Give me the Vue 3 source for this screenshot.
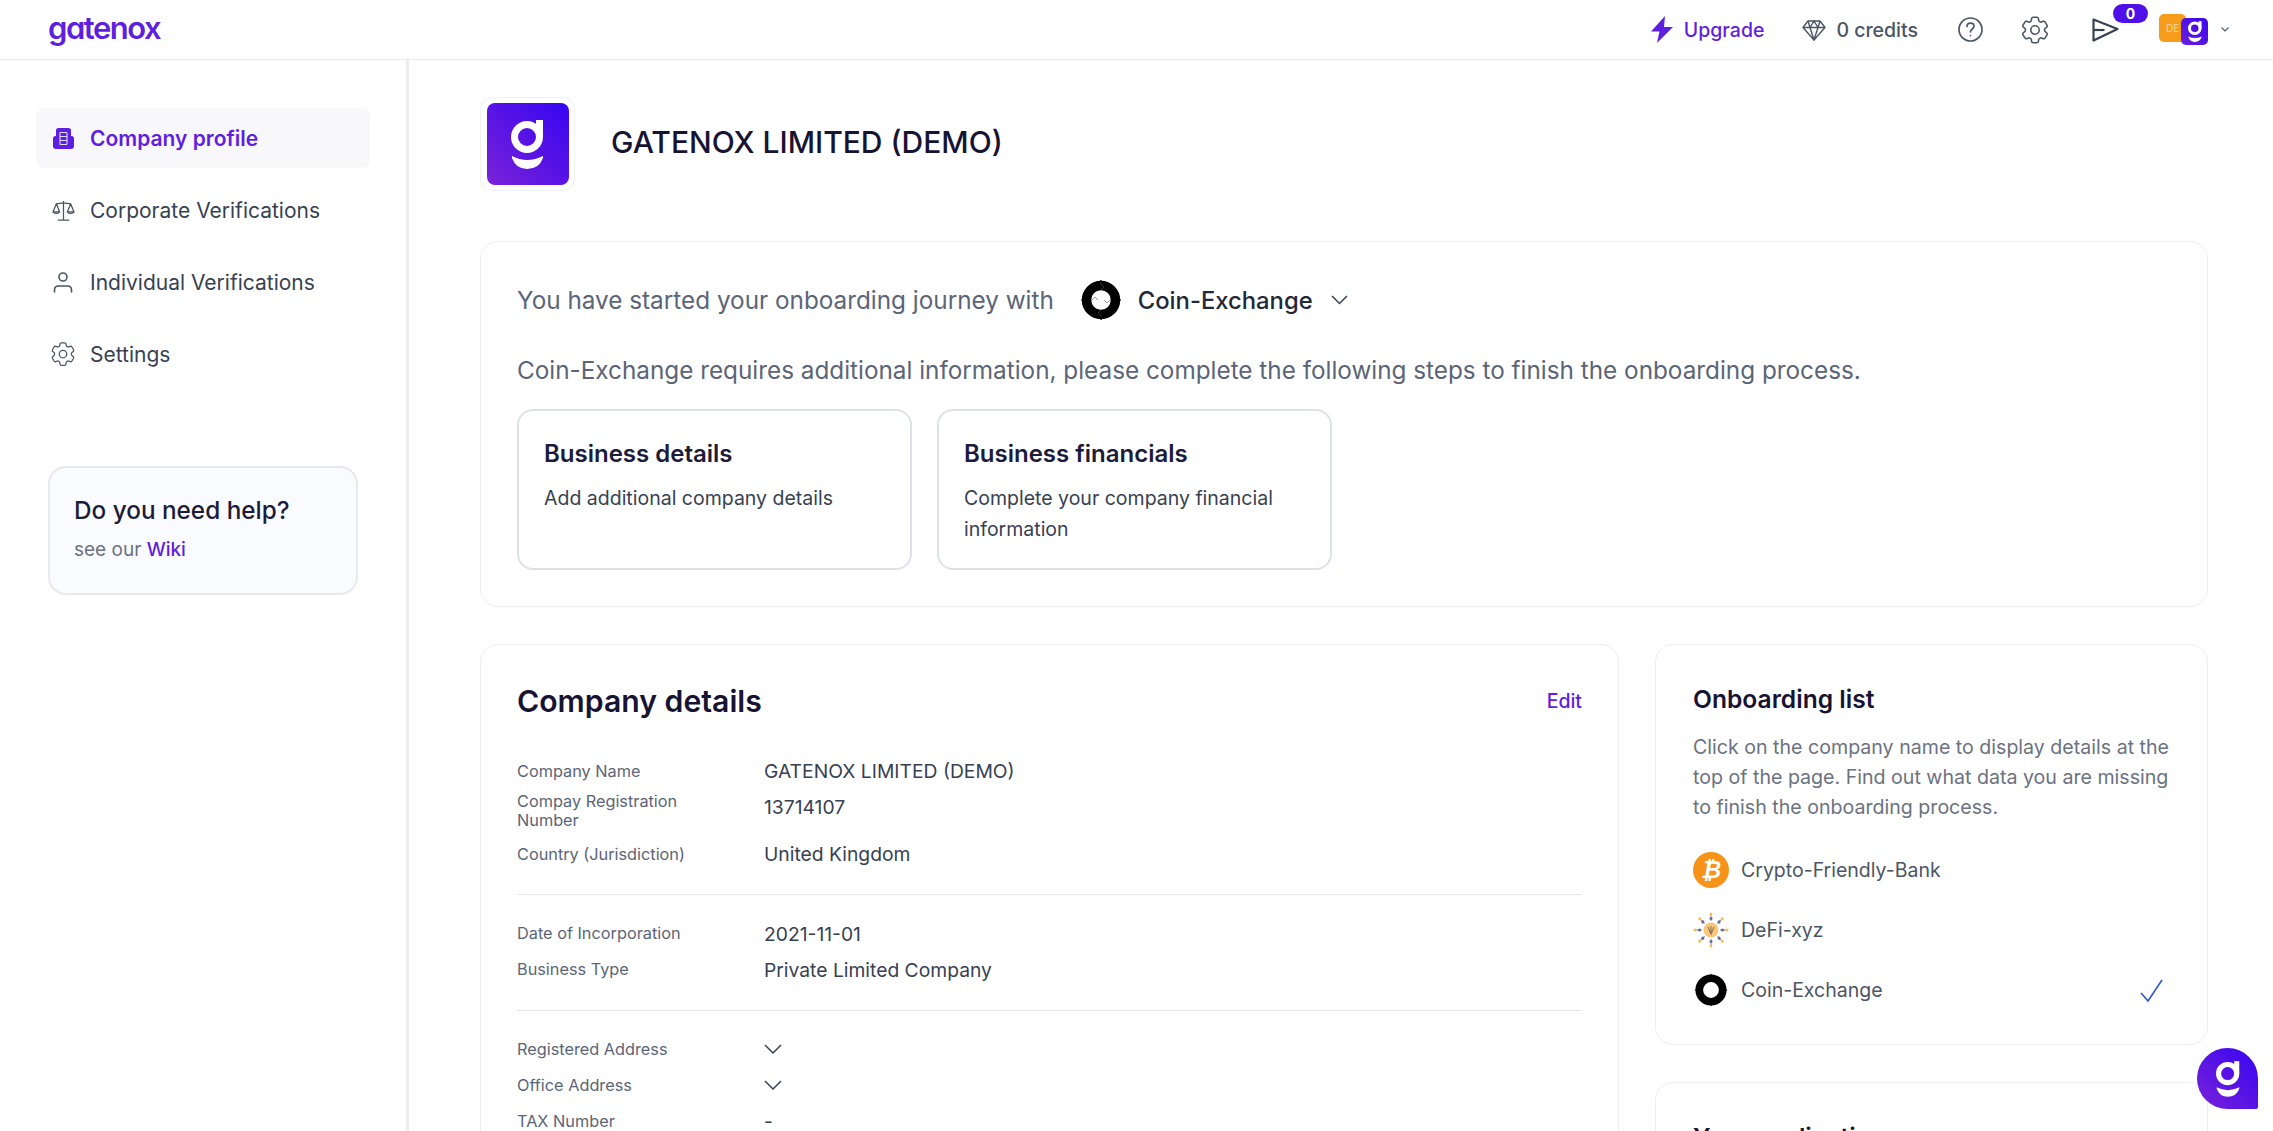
<script setup>
const navItems = [
  { label: "Company profile", icon: "building", active: true },
  { label: "Corporate Verifications", icon: "scale" },
  { label: "Individual Verifications", icon: "person" },
  { label: "Settings", icon: "gear" },
];
const gearPath = "M9.594 3.94c.09-.542.56-.94 1.11-.94h2.593c.55 0 1.02.398 1.11.94l.213 1.281c.063.374.313.686.645.87.074.04.147.083.22.127.324.196.72.257 1.075.124l1.217-.456a1.125 1.125 0 011.37.49l1.296 2.247a1.125 1.125 0 01-.26 1.431l-1.003.827c-.293.24-.438.613-.431.992a6.759 6.759 0 010 .255c-.007.378.138.75.43.99l1.005.828c.424.35.534.954.26 1.43l-1.298 2.247a1.125 1.125 0 01-1.369.491l-1.217-.456c-.355-.133-.75-.072-1.076.124a6.57 6.57 0 01-.22.128c-.331.183-.581.495-.644.869l-.213 1.28c-.09.543-.56.941-1.11.941h-2.594c-.55 0-1.02-.398-1.11-.94l-.213-1.281c-.062-.374-.312-.686-.644-.87a6.52 6.52 0 01-.22-.127c-.325-.196-.72-.257-1.076-.124l-1.217.456a1.125 1.125 0 01-1.369-.49l-1.297-2.247a1.125 1.125 0 01.26-1.431l1.004-.827c.292-.24.437-.613.43-.992a6.932 6.932 0 010-.255c.007-.378-.138-.75-.43-.99l-1.004-.828a1.125 1.125 0 01-.26-1.43l1.297-2.247a1.125 1.125 0 011.37-.491l1.216.456c.356.133.751.072 1.076-.124.072-.044.146-.087.22-.128.332-.183.582-.495.644-.869l.214-1.281z";
const steps = [
  { title: "Business details", text: "Add additional company details" },
  { title: "Business financials", text: "Complete your company financial information" },
];
const groups = [
  [
    { label: "Company Name", value: "GATENOX LIMITED (DEMO)" },
    { label: "Compay Registration Number", value: "13714107", top: true },
    { label: "Country (Jurisdiction)", value: "United Kingdom" },
  ],
  [
    { label: "Date of Incorporation", value: "2021-11-01" },
    { label: "Business Type", value: "Private Limited Company" },
  ],
  [
    { label: "Registered Address", chevron: true },
    { label: "Office Address", chevron: true },
    { label: "TAX Number", value: "-" },
  ],
];
const onboarding = [
  { name: "Crypto-Friendly-Bank", icon: "btc" },
  { name: "DeFi-xyz", icon: "defi" },
  { name: "Coin-Exchange", icon: "ring", selected: true },
];
const rays = [0, 45, 90, 135, 180, 225, 270, 315];
</script>

<template>
  <div class="page">
    <header class="topbar">
      <span class="brand">gatenox</span>
      <div class="tools">
        <span class="tool upgrade">
          <svg width="24" height="27" viewBox="0 0 24 27"><path d="M15 0 1 15.500h8.500L7 27l16-16h-9z" fill="#5f1fe0"/></svg>
          Upgrade
        </span>
        <span class="tool credits">
          <svg width="24" height="24" viewBox="0 0 24 24" fill="none" stroke="#4b5563" stroke-width="1.400" stroke-linejoin="round"><path d="M6 3h12l5 6.500L12 22 1 9.500z"/><path d="M1 9.500h22M8 9.500 12 22l4-12.500M6 3l2 6.500L12 3l4 6.500L18 3"/></svg>
          0 credits
        </span>
        <svg width="25" height="25" viewBox="0 0 25 25" fill="none" stroke="#4b5563" stroke-width="1.700" stroke-linecap="round"><circle cx="12.500" cy="12.500" r="11.500"/><path d="M9 9.500c0-2 1.600-3.300 3.500-3.300S16 7.500 16 9.300c0 2.700-3.500 2.700-3.500 5.500"/><path d="M12.500 18.500v.1"/></svg>
        <svg class="top-gear" width="34" height="34" viewBox="0 0 24 24" fill="none" stroke="#4b5563" stroke-width="1.100" stroke-linejoin="round"><path :d="gearPath"/><circle cx="12" cy="12" r="3"/></svg>
        <span class="send">
          <svg width="27" height="24" viewBox="0 0 27 24" fill="none" stroke="#374151" stroke-width="2.200" stroke-linejoin="round"><path d="M1.500 1.500 25.500 11 1.500 22.500z"/><path d="M1.500 12h11"/></svg>
          <span class="badge">0</span>
        </span>
        <span class="avatar">
          <span class="avatar-de">DE</span>
          <span class="avatar-g">
            <svg width="14" height="21" viewBox="0 0 33 49"><circle cx="16" cy="17" r="12.500" fill="none" stroke="#fff" stroke-width="7"/><path d="M25 0h7v17h-7z" fill="#fff"/><path d="M1 36Q16 44 32 36L32 38Q28 49 16 49 5 49 1 38z" fill="#fff"/></svg>
          </span>
        </span>
        <svg class="small-chevron" width="8" height="5" viewBox="0 0 8 5" fill="none" stroke="#4b5563" stroke-width="1.100"><path d="m.5.5 3.500 3.500L7.500.5"/></svg>
      </div>
    </header>

    <div class="body">
      <aside class="sidebar">
        <nav class="nav">
          <a v-for="item in navItems" :key="item.label" class="nav-item" :class="{ active: item.active }">
            <span class="nav-icon">
              <svg v-if="item.icon === 'building'" width="21" height="21" viewBox="0 0 21 21"><path d="M3 8V2.500Q3 0 5.500 0h10Q18 0 18 2.500V8h.5Q21 8 21 10.500V18q0 3-3 3H3q-3 0-3-3v-7.500Q0 8 2.500 8z" fill="#5f1fe0"/><path d="M7 4.500h7M7 8.500h7M7 12.500h7M7 16.500h7M7 4.500v12M14 4.500v12" stroke="#e4d8fb" stroke-width="1.100" fill="none"/></svg>
              <svg v-else-if="item.icon === 'scale'" width="23" height="21" viewBox="0 0 24 22" fill="none" stroke="#4b5563" stroke-width="1.300" stroke-linejoin="round"><path d="M12 1v20M6 21h12M4.500 4 12 3l7.500 1"/><path d="M4.500 4 1 12.500h7zM19.500 4 16 12.500h7z"/><path d="M1 12.500q3.500 3 7 0M16 12.500q3.500 3 7 0"/></svg>
              <svg v-else-if="item.icon === 'person'" width="20" height="21" viewBox="0 0 20 21" fill="none" stroke="#4b5563" stroke-width="1.600"><circle cx="10" cy="5" r="4"/><path d="M1.500 20.500v-2.500q0-4 4-4h9q4 0 4 4v2.500"/></svg>
              <svg v-else width="38" height="38" viewBox="0 0 24 24" fill="none" stroke="#4b5563" stroke-width="1" stroke-linejoin="round"><path :d="gearPath"/><circle cx="12" cy="12" r="3"/></svg>
            </span>
            {{ item.label }}
          </a>
        </nav>
        <div class="help">
          <div class="help-title">Do you need help?</div>
          <div class="help-text">see our <a class="wiki">Wiki</a></div>
        </div>
      </aside>

      <main class="main">
        <div class="company-head">
          <span class="company-logo">
            <span class="company-logo-inner">
              <svg width="33" height="49" viewBox="0 0 33 49"><circle cx="16" cy="17" r="12.500" fill="none" stroke="#fff" stroke-width="7"/><path d="M25 0h7v17h-7z" fill="#fff"/><path d="M1 36Q16 44 32 36L32 38Q28 49 16 49 5 49 1 38z" fill="#fff"/></svg>
            </span>
          </span>
          <h1 class="company-name">GATENOX LIMITED (DEMO)</h1>
        </div>

        <section class="card journey">
          <div class="journey-line">
            <span>You have started your onboarding journey with</span>
            <span class="journey-pick">
              <svg width="42" height="42" viewBox="0 0 42 42"><circle cx="21" cy="21" r="14.500" fill="none" stroke="#000" stroke-width="9.500"/><path d="M21 1v4M21 37v4M1 21h4M37 21h4" stroke="#000" stroke-width="1.200"/><path d="M20 4l4 4-3 3M31 20l-4 4-3-3M22 38l-4-4 3-3M11 22l4-4 3 3" fill="none" stroke="#555" stroke-width=".6"/></svg>
              <span class="journey-name">Coin-Exchange</span>
              <svg width="17" height="10" viewBox="0 0 17 10" fill="none" stroke="#374151" stroke-width="1.500"><path d="m1 1 7.500 7.500L16 1"/></svg>
            </span>
          </div>
          <p class="journey-note">Coin-Exchange requires additional information, please complete the following steps to finish the onboarding process.</p>
          <div class="steps">
            <div v-for="step in steps" :key="step.title" class="step">
              <div class="step-title">{{ step.title }}</div>
              <div class="step-text">{{ step.text }}</div>
            </div>
          </div>
        </section>

        <div class="columns">
          <section class="card details">
            <div class="details-head">
              <h2>Company details</h2>
              <a class="edit">Edit</a>
            </div>
            <div v-for="(group, i) in groups" :key="i" class="group">
              <div v-for="row in group" :key="row.label" class="row" :class="{ top: row.top }">
                <div class="row-label">{{ row.label }}</div>
                <div class="row-value">
                  <svg v-if="row.chevron" width="18" height="11" viewBox="0 0 18 11" fill="none" stroke="#374151" stroke-width="1.500"><path d="m1 1 8 8 8-8"/></svg>
                  <template v-else>{{ row.value }}</template>
                </div>
              </div>
            </div>
          </section>

          <div class="side-col">
            <section class="card onboarding">
              <h3>Onboarding list</h3>
              <p>Click on the company name to display details at the top of the page. Find out what data you are missing to finish the onboarding process.</p>
              <ul class="ob-list">
                <li v-for="ob in onboarding" :key="ob.name" class="ob-item">
                  <span v-if="ob.icon === 'btc'" class="btc">₿</span>
                  <svg v-else-if="ob.icon === 'defi'" width="36" height="36" viewBox="0 0 36 36">
                    <circle cx="18" cy="18" r="7.500" fill="#f8c77a"/>
                    <g v-for="a in rays" :key="a" :transform="`rotate(${a} 18 18)`">
                      <path d="M18 9V3" stroke="#8a8aa8" stroke-width="1"/>
                      <circle cx="18" cy="6.500" r="1.500" fill="#66668c"/>
                      <circle cx="18" cy="2" r="1.500" fill="#f5c04f"/>
                    </g>
                    <path d="M15 15l3 7 3-7M18 14v8" fill="none" stroke="#8d7357" stroke-width="1.100"/>
                  </svg>
                  <svg v-else class="ob-ring" width="34" height="34" viewBox="0 0 42 42"><circle cx="21" cy="21" r="14.500" fill="none" stroke="#000" stroke-width="9.500"/><path d="M21 1v4M21 37v4M1 21h4M37 21h4" stroke="#000" stroke-width="1.200"/></svg>
                  <span class="ob-name">{{ ob.name }}</span>
                  <svg v-if="ob.selected" class="ob-check" width="23" height="23" viewBox="0 0 23 23" fill="none" stroke="#2f55d4" stroke-width="1.600"><path d="m1 14 7 8L22 1"/></svg>
                </li>
              </ul>
            </section>
            <section class="card applications">
              <h3>Your applications</h3>
            </section>
          </div>
        </div>
      </main>
    </div>

    <div class="chat-bubble">
      <svg width="24" height="36" viewBox="0 0 33 49"><circle cx="16" cy="17" r="12.500" fill="none" stroke="#fff" stroke-width="7"/><path d="M25 0h7v17h-7z" fill="#fff"/><path d="M1 36Q16 44 32 36L32 38Q28 49 16 49 5 49 1 38z" fill="#fff"/></svg>
    </div>
  </div>
</template>

<style scoped>
.page{position: relative;height: 1131px;overflow: hidden;background: #fff;font-family: Inter, "Noto Sans", sans-serif;color: #374151}
.topbar{height: 59px;border-bottom: 1px solid #e8e8ec;display: flex;align-items: center;justify-content: space-between;padding: 0 44px 0 48px}
.brand{font-size: 31px;font-weight: 600;letter-spacing: -1.500px;color: #5f1fe0;line-height: 1;margin-top: -4px;font-feature-settings: "cv11"}
.tools{display: flex;align-items: center;gap: 40px}
.tool{display: flex;align-items: center;gap: 10px;font-size: 19.500px;font-weight: 500;color: #4b5563}
.upgrade{color: #5f1fe0;margin-right: -2px}
.top-gear{margin: 0 .5px 0 -5.500px}
.send{position: relative;display: flex}
.badge{position: absolute;left: 21px;top: -14px;width: 35px;height: 19px;border-radius: 10px;background: #4f0fe8;color: #fff;font-size: 14px;font-weight: 700;display: flex;align-items: center;justify-content: center}
.avatar{display: flex;width: 49px;height: 31px;position: relative}
.avatar-de{width: 27px;height: 28px;border-radius: 5px;background: #f59c1a;color: #fbd9a3;font-size: 10px;display: flex;align-items: center;padding-left: 7px;box-sizing: border-box}
.avatar-g{position: absolute;right: 0;top: 4px;width: 27px;height: 27px;border-radius: 5px;background: linear-gradient(to top right, #6a1fdc, #3a05f0);display: flex;align-items: center;justify-content: center}
.small-chevron{margin-left: -27px}
.body{display: flex;height: 1072px}
.sidebar{width: 409px;flex: none;border-right: 3px solid #ededf0;padding: 48px 36px 0 36px;box-sizing: border-box}
.nav{display: flex;flex-direction: column;gap: 12px}
.nav-item{height: 60px;border-radius: 8px;display: flex;align-items: center;font-size: 21px;color: #374151;padding-left: 12px}
.nav-item.active{background: #f8f8fb;color: #5f1fe0;font-weight: 600}
.nav-icon{width: 30px;flex: none;display: flex;align-items: center;justify-content: center;padding-right: 12px}
.help{margin: 82px 12px 0 12px;height: 129px;box-sizing: border-box;border: 2px solid #e8e9ef;border-radius: 18px;background: #fafbfe;padding: 25px 24px}
.help-title{font-size: 24.300px;font-weight: 500;color: #1c1b3a;line-height: 34px}
.help-text{font-size: 19px;color: #6b7280;margin-top: 11px;line-height: 24px}
.wiki{color: #5f1fe0;font-weight: 500}
.main{flex: 1;padding: 37px 65px 0 71px;box-sizing: border-box;min-width: 0}
.company-head{display: flex;align-items: center;gap: 36px;margin-bottom: 50px}
.company-logo{width: 95px;height: 94px;box-sizing: border-box;border: 1px solid #eef0f4;border-radius: 12px;display: flex;align-items: center;justify-content: center}
.company-logo-inner{width: 82px;height: 82px;border-radius: 8px;background: linear-gradient(to top right, #7a22d8, #3605f2);display: flex;align-items: center;justify-content: center}
.company-name{margin: -4px 0 0;font-size: 30px;font-weight: 500;color: #171433}
.card{box-sizing: border-box;border: 1px solid #eceef2;border-radius: 18px;background: #fff}
.journey{padding: 37px 36px 36px;margin-bottom: 37px;height: 366px}
.journey-line{display: flex;align-items: center;gap: 26px;font-size: 24.300px;color: #5b6577;height: 42px}
.journey-pick{display: flex;align-items: center;color: #1f2937}
.journey-name{margin: 0 18px 0 16px;font-size: 23.800px;font-weight: 500}
.journey-note{margin: 34px 0 24px;font-size: 24.300px;line-height: 30px;color: #5b6577}
.steps{display: flex;gap: 25px}
.step{width: 395px;height: 161px;box-sizing: border-box;border: 2px solid #dfe1e8;border-radius: 16px;padding: 26px 25px}
.step-title{font-size: 24px;font-weight: 600;color: #1c1b3a;line-height: 34px}
.step-text{margin-top: 12px;font-size: 19.500px;line-height: 31px;color: #374151}
.columns{display: flex;gap: 36px;align-items: flex-start}
.details{flex: 1;min-width: 0;padding: 36px}
.details-head{display: flex;align-items: center;justify-content: space-between;margin-bottom: 35px;height: 40px}
.details-head h2{margin: 0;font-size: 30.200px;font-weight: 600;color: #171433}
.edit{color: #5f1fe0;font-size: 19.500px;font-weight: 500}
.group{display: flex;flex-direction: column;gap: 6px}
.group + .group{margin-top: 25px;padding-top: 23.500px;border-top: 1px solid #e6e7ee}
.row{display: grid;grid-template-columns: 247px 1fr;align-items: center;min-height: 30px}
.row.top{align-items: start;margin-bottom: 3px}
.row-label{font-size: 16.300px;line-height: 19px;color: #5b6577;padding-right: 40px}
.row-value{font-size: 19.300px;line-height: 30px;color: #374151;display: flex;align-items: center;min-height: 30px}
.side-col{width: 553px;flex: none;display: flex;flex-direction: column;gap: 37px}
.onboarding{padding: 38px 36px 36px 37px;height: 401px}
.onboarding h3,.applications h3{margin: 0;font-size: 24.600px;font-weight: 600;line-height: 32px;color: #171433}
.onboarding p{margin: 17px 0 30px;font-size: 19.600px;line-height: 30px;color: #6b7280}
.ob-list{list-style: none;margin: 0;padding: 0;display: flex;flex-direction: column;gap: 24px}
.ob-item{display: flex;align-items: center;height: 36px;font-size: 19.500px;color: #4b5563}
.ob-name{margin-left: 12px}
.ob-ring{margin: 0 1px}
.ob-check{margin-left: auto;margin-right: 8px}
.btc{width: 36px;height: 36px;border-radius: 50%;background: #f7931a;color: #fff;font-family: "DejaVu Sans", sans-serif;font-size: 23px;font-weight: 700;font-style: italic;display: flex;align-items: center;justify-content: center}
.applications{padding: 38px 37px;height: 300px}
.chat-bubble{position: absolute;left: 2197px;top: 1048px;width: 61px;height: 61px;border-radius: 50% 50% 2px 50%;background: linear-gradient(to top right, #7a22d8, #3605f2);display: flex;align-items: center;justify-content: center}
</style>
